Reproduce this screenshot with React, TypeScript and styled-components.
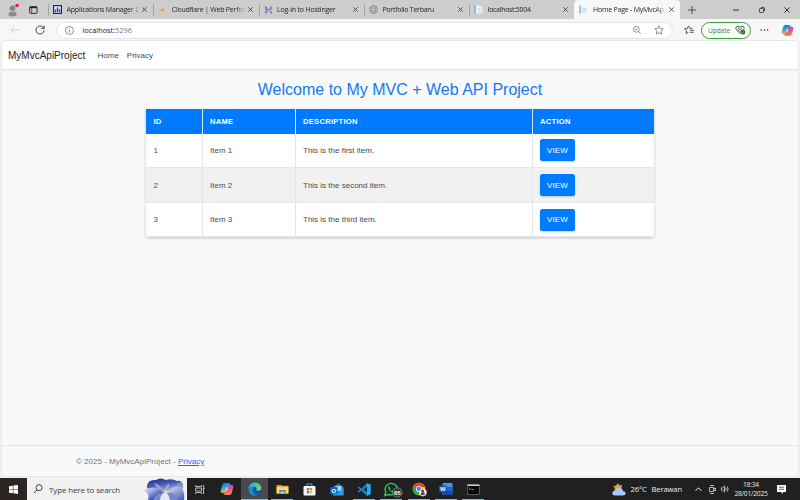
import React from "react";
import styled, { createGlobalStyle } from "styled-components";

const Global = createGlobalStyle`
  * { box-sizing: border-box; }
  body { margin: 0; overflow: hidden; background: #f3f3f4; }
  svg { display: block; flex: none; overflow: visible; }
`;

const ui = `"Open Sans", "Noto Sans", sans-serif`;
const web = `"Liberation Sans", Arial, sans-serif`;

const Screen = styled.div`
  width: 800px;
  height: 500px;
  display: flex;
  flex-direction: column;
  font-family: ${ui};
`;

/* Tab strip */
const TabStrip = styled.div`
  height: 19px;
  flex: none;
  display: flex;
  background: #cdcdcd;
`;
const StripTools = styled.div`
  width: 48px;
  display: flex;
  align-items: center;
  padding-left: 6px;
  gap: 10px;
`;
const Tab = styled.div<{ $active?: boolean }>`
  width: ${(p) => (p.$active ? 106 : 105.3)}px;
  height: 19px;
  display: flex;
  align-items: center;
  padding: 0 6px 0 3px;
  background: ${(p) => (p.$active ? "#f7f7f7" : "transparent")};
  border-radius: 4px 4px 0 0;
  &::before {
    content: "";
    width: 1px;
    height: 12px;
    margin: 0 4px 0 -3px;
    background: ${(p) => (p.$active ? "transparent" : "#a4a4a4")};
  }
`;
const TabLabel = styled.span<{ $track: number }>`
  flex: 1;
  margin-left: 4.5px;
  white-space: nowrap;
  font-size: 7px;
  line-height: 12px;
  letter-spacing: ${(p) => p.$track}px;
  color: #252525;
  mask-image: linear-gradient(to right, #000 63px, transparent 74px);
`;
const WindowButtons = styled.div`
  flex: 1;
  display: flex;
  align-items: center;
  padding-left: 8px;
`;
const Push = styled.div<{ $w: number }>`
  width: ${(p) => p.$w}px;
  flex: none;
`;

/* Address toolbar */
const Toolbar = styled.div`
  height: 22px;
  flex: none;
  display: flex;
  align-items: center;
  background: #f7f7f7;
  padding-left: 10px;
`;
const AddressBar = styled.div`
  width: 617px;
  height: 17px;
  margin-left: 11px;
  display: flex;
  align-items: center;
  padding-left: 8px;
  background: #fff;
  border: 1px solid #e4e4e4;
  border-radius: 9px;
`;
const Url = styled.span`
  flex: 1;
  margin-left: 8.5px;
  font-size: 7.4px;
  line-height: 14px;
  letter-spacing: -0.03px;
  color: #222;
  span { color: #777; }
`;
const UpdateButton = styled.div`
  width: 50px;
  height: 17px;
  margin-left: 7px;
  padding-left: 6px;
  display: flex;
  align-items: center;
  gap: 5px;
  border: 1px solid #3f9a42;
  border-radius: 9px;
  background: #fbfefb;
  font-size: 6.6px;
  letter-spacing: -0.1px;
  color: #2f8a34;
`;

/* Web page */
const Page = styled.div`
  width: 796px;
  height: 435px;
  margin: 0 2px 2px;
  flex: none;
  display: flex;
  flex-direction: column;
  background: #f8f9fb;
  border-radius: 4px;
  overflow: hidden;
  box-shadow: 0 0 1px 1px #e6e7e9;
  font-family: ${web};
`;
const Nav = styled.nav`
  height: 28px;
  flex: none;
  display: flex;
  align-items: center;
  padding-left: 6px;
  background: #fff;
  box-shadow: 0 1px 2px #dfe1e4;
  color: #4a4a4a;
  font-size: 8px;
`;
const Brand = styled.span`
  width: 89.5px;
  font-size: 10px;
  color: #1c1c1c;
`;
const NavLink = styled.span`
  margin-right: 8px;
`;
const Main = styled.main`
  flex: 1;
  display: flex;
  flex-direction: column;
  align-items: center;
`;
const Title = styled.h1`
  margin: 11px 0 10px;
  height: 19px;
  line-height: 19px;
  font-size: 16px;
  font-weight: 400;
  color: #1478f0;
  white-space: nowrap;
`;
const Table = styled.div`
  width: 508px;
  background: #fff;
  box-shadow: 0 1px 3px rgba(0, 0, 0, 0.22);
`;
const Row = styled.div<{ $head?: boolean; $striped?: boolean; $h: number }>`
  display: grid;
  grid-template-columns: 56.5px 93px 237px 1fr;
  height: ${(p) => p.$h}px;
  background: ${(p) => (p.$head ? "#007bff" : p.$striped ? "#f1f1f1" : "#fff")};
  color: ${(p) => (p.$head ? "#fff" : "#4b4b4b")};
  font-size: ${(p) => (p.$head ? 7.6 : 8)}px;
  font-weight: ${(p) => (p.$head ? 700 : 400)};
  letter-spacing: ${(p) => (p.$head ? 0.26 : 0)}px;
  border-bottom: ${(p) => (p.$head ? "none" : "1px solid #e6e8ea")};
`;
const Cell = styled.div`
  display: flex;
  align-items: center;
  padding-left: 7.5px;
  border-right: 1px solid #dfe6ec;
  &:last-child { border-right: none; }
`;
const ViewButton = styled.button`
  width: 35px;
  height: 22px;
  padding: 0;
  border: none;
  border-radius: 2.5px;
  background: #007bff;
  box-shadow: 0 1px 2px rgba(0, 0, 0, 0.2);
  color: #fff;
  font: 8px ${web};
  letter-spacing: 0.1px;
`;
const Footer = styled.footer`
  height: 31px;
  flex: none;
  padding: 0 0 0 74px;
  border-top: 1px solid #e2e5e8;
  line-height: 31px;
  font-size: 8px;
  color: #6c737a;
  a { color: #1a6ce8; text-decoration: underline; }
`;

/* Taskbar */
const Taskbar = styled.div`
  height: 22px;
  flex: none;
  display: flex;
  background: #202020;
`;
const StartButton = styled.div`
  width: 27px;
  display: flex;
  align-items: center;
  justify-content: center;
  background: #2c2523;
`;
const SearchBox = styled.div`
  width: 159.5px;
  display: flex;
  align-items: center;
  padding-left: 6px;
  background: #f1f1f1;
  font-size: 8px;
  color: #3c3c3c;
`;
const SearchText = styled.span`
  width: 95px;
  margin-left: 6px;
  white-space: nowrap;
  letter-spacing: -0.13px;
`;
const TaskSlot = styled.div<{ $open?: boolean; $active?: boolean }>`
  width: 27.3px;
  display: flex;
  align-items: center;
  justify-content: center;
  background-color: ${(p) => (p.$active ? "#484a4d" : "transparent")};
  background-image: ${(p) => (p.$open || p.$active ? "linear-gradient(#86b9e6, #86b9e6)" : "none")};
  background-size: ${(p) => (p.$active ? "100%" : "22px")} 1px;
  background-repeat: no-repeat;
  background-position: bottom center;
`;
const Tray = styled.div`
  flex: 1;
  display: flex;
  align-items: center;
  justify-content: flex-end;
  padding-right: 14px;
  font-size: 7.6px;
  color: #ededed;
  white-space: nowrap;
`;
const Weather = styled.span`
  margin: 0 13px 0 4px;
  letter-spacing: -0.12px;
  word-spacing: 3px;
`;
const Clock = styled.div`
  width: 36px;
  margin: 0 8px 0 4px;
  text-align: center;
  font-size: 6.6px;
  line-height: 9px;
  letter-spacing: -0.18px;
`;

type IconProps = { size?: number };

const Close = ({ size = 5 }: IconProps) => (
  <svg width={size} height={size} viewBox="0 0 6 6" stroke="#333" strokeWidth="1" fill="none">
    <path d="M.4.4l5.2 5.2M5.6.4L.4 5.6" />
  </svg>
);
const Avatar = () => (
  <svg width="13" height="14" viewBox="0 0 13 14">
    <circle cx="6.5" cy="5.3" r="2.8" fill="#858585" />
    <path d="M2.500 12.500V11q0-2.300 2.400-2.300h3.200Q10.500 8.700 10.500 11v1.500q-4 2-8 0z" fill="#8b8b8b" />
    <circle cx="11" cy="2.500" r="1.800" fill="#df2531" />
  </svg>
);
const Workspaces = () => (
  <svg width="9" height="8" viewBox="0 0 9 8" fill="none" stroke="#222">
    <rect x=".6" y=".6" width="7.400" height="6.800" rx="1" strokeWidth=".9" />
    <path d="M.6 1.500h7.400" strokeWidth="1.300" />
    <path d="M2.700 2v5.300" strokeWidth=".7" />
  </svg>
);
const ManagerIcon = () => (
  <svg width="9" height="9" viewBox="0 0 9 9">
    <rect x=".6" y=".6" width="7.800" height="7.800" fill="#e6ebff" stroke="#0f1f96" strokeWidth="1.200" />
    <path d="M2 7V5l1-.7V7zM4 7V2.500h1V7zM6 7V4l1 .7V7z" fill="#2443b8" stroke="#2443b8" strokeWidth=".4" />
  </svg>
);
const CloudIcon = () => (
  <svg width="9" height="9" viewBox="0 0 9 9">
    <path d="M.5 6Q1 4.500 2.500 4.700 3.500 2.500 5.500 3.400q.9.400 1 1.200L6 6z" fill="#f0a34f" />
    <path d="M6.400 6l.5-1.300Q8.400 4.600 8.600 6z" fill="#f8cc8c" />
  </svg>
);
const HostingerIcon = () => (
  <svg width="9" height="9" viewBox="0 0 9 9" fill="#8b7ed0">
    <path d="M1 .8l2 1.100v1.900h3.200L8 5H1zM6 .8l2 1.100v2.500L6 3.400zM1 8.200V5.500h5l2 1.200v2.300L6 8V6.600H3v2.500z" />
  </svg>
);
const GlobeIcon = () => (
  <svg width="9" height="9" viewBox="0 0 9 9" fill="none" stroke="#858585" strokeWidth=".7">
    <circle cx="4.500" cy="4.500" r="4" />
    <ellipse cx="4.500" cy="4.500" rx="1.800" ry="4" />
    <path d="M.9 3h7.200M.9 6h7.200" />
  </svg>
);
const DocIcon = () => (
  <svg width="9" height="9" viewBox="0 0 9 9">
    <path d="M1 .5h5l2.300 2.300v5.700H1z" fill="#eef6fc" />
    <path d="M1.100.5v8" stroke="#548eb9" />
    <path d="M3.500 3.500h3.500M3.500 5.300h4M3.500 7h4" stroke="#b8d1e5" strokeWidth=".8" />
  </svg>
);
const Copilot = ({ size = 14 }: IconProps) => (
  <svg width={size} height={size} viewBox="0 0 14 14">
    <defs>
      <linearGradient id="cpA" x2=".3" y2="1"><stop stopColor="#1267d8" /><stop offset=".5" stopColor="#25a8d5" /><stop offset="1" stopColor="#e1c934" /></linearGradient>
      <linearGradient id="cpB" x2=".2" y2="1"><stop stopColor="#a64be0" /><stop offset=".5" stopColor="#e65299" /><stop offset="1" stopColor="#f58a45" /></linearGradient>
    </defs>
    <path d="M4.500 1h4.200q1.300 0 1.700 1.400L10.700 4H8.600L6.200 10.300Q5.800 11 5 11H2.500Q.2 11 .7 8.600l1.600-5.500Q2.900 1 4.500 1z" fill="url(#cpA)" />
    <path d="M9.500 13H5.300Q4 13 3.600 11.600L3.300 10h2.100l2.400-6.300Q8.200 3 9 3h2.500q2.300 0 1.800 2.400l-1.600 5.500Q11.100 13 9.500 13z" fill="url(#cpB)" />
    <path d="M6.600 5.200h1.200L7 8.700H5.600z" fill="#fff" opacity=".8" />
  </svg>
);
const BackIcon = () => (
  <svg width="10" height="8" viewBox="0 0 10 8" fill="none" stroke="#cfcfcf" strokeWidth=".9"><path d="M9.500 4H1M4.300.8L1 4l3.300 3.200" /></svg>
);
const ReloadIcon = () => (
  <svg width="10" height="10" viewBox="0 0 10 10" fill="none" stroke="#444" strokeWidth="1"><path d="M9 5.200A4 4 0 1 1 7.800 2.100L9 3.300M9.100.6v2.800H6.300" /></svg>
);
const InfoIcon = () => (
  <svg width="9" height="9" viewBox="0 0 9 9" fill="none" stroke="#777" strokeWidth=".8"><circle cx="4.500" cy="4.500" r="4" /><path d="M4.500 4v2.700M4.500 2.300v.9" /></svg>
);
const ZoomIcon = () => (
  <svg width="8" height="8" viewBox="0 0 8 8" fill="none" stroke="#777" strokeWidth=".8"><circle cx="3.300" cy="3.300" r="2.900" /><path d="M5.400 5.400l2.400 2.400M2 3.300h2.600" /></svg>
);
const StarIcon = () => (
  <svg width="10" height="10" viewBox="0 0 10 10" fill="none" stroke="#777" strokeWidth=".8" strokeLinejoin="round"><path d="M5 .8l1.300 2.700 3 .4-2.200 2.100.5 3L5 7.600 2.400 9l.5-3L.7 3.900l3-.4z" /></svg>
);
const FavoritesIcon = () => (
  <svg width="10" height="10" viewBox="0 0 10 10" fill="none" stroke="#444" strokeWidth=".9" strokeLinejoin="round"><path d="M8.300 3.400l-2.500-.1L4.500.9 3.300 3.400l-2.700.4 2 1.900-.5 2.900 2.400-1.300M6 5.300h3.700M6 7.300h3.700" /></svg>
);
const HeartIcon = () => (
  <svg width="11" height="10" viewBox="0 0 11 10" fill="none" stroke="#384538" strokeWidth=".9">
    <path d="M5 8.300L1.300 4.800Q.2 3 1.500 1.800 3.300.4 5 2.200 6.800.4 8.600 1.800 9.600 3 8.900 4.400M3 2.800l2 1.900L6.800 3M3 5l1.500 1.300" />
    <circle cx="7.800" cy="7" r="2.500" fill="#28722d" stroke="none" /><path d="M6.600 7l.9.900L9 6.300" stroke="#c5e8c6" strokeWidth=".6" />
  </svg>
);
const WindowsLogo = () => (
  <svg width="9" height="9" viewBox="0 0 9 9" fill="#fff"><path d="M0 1.200l3.900-.5v3.500H0zM4.400.6L9 0v4.200H4.400zM0 4.700h3.900v3.500L0 7.700zM4.400 4.700H9V9l-4.600-.7z" /></svg>
);
const SearchIcon = () => (
  <svg width="10" height="10" viewBox="0 0 10 10" fill="none" stroke="#333" strokeWidth=".9"><circle cx="6" cy="3.700" r="3" /><path d="M3.900 5.900L.8 9.200" /></svg>
);
const FlowerArt = () => (
  <svg width="43" height="22" viewBox="0 0 43 22">
    <defs>
      <linearGradient id="pt" x2=".4" y2="1"><stop stopColor="#1f2a80" /><stop offset=".45" stopColor="#4257b0" /><stop offset="1" stopColor="#c4c8f3" /></linearGradient>
      <linearGradient id="pb" x2=".7" y2=".6"><stop stopColor="#e4e6fa" /><stop offset=".5" stopColor="#9aa6df" /><stop offset="1" stopColor="#3850a8" /></linearGradient>
      <linearGradient id="pc" x2=".8" y2="1"><stop stopColor="#dde2fb" /><stop offset="1" stopColor="#4e64b8" /></linearGradient>
    </defs>
    <path d="M3 8Q4 1 12 2q4-3 10 0 6-2 11 1 5-1 6 4 1 3-1 6L27 16 9 12Q2 12 3 8z" fill="url(#pt)" />
    <path d="M0 12Q9 7 18 12l5 3-5 7H4Q6 16 0 12z" fill="url(#pb)" />
    <path d="M23 14Q31 6 38 10q3 5 2 12H24z" fill="url(#pc)" />
    <path d="M9 22q3-7 10-8l6 .5q7 1 9 7.500z" fill="#7485cc" />
    <path d="M16 22q0-6 6-8 3 3 4 8z" fill="#e4e7fb" />
    <path d="M10 5q6 1 9 7-7-1-9-7zM25 5q-4 3-3 7 4-2 3-7z" fill="#a9b5ec" opacity=".7" />
    <path d="M16 12l4 1.200 2-2.500 1 2.500 4 .5-5 2z" fill="#e7cfa7" />
    <path d="M33 8l5-4" stroke="#e2cca9" strokeWidth=".7" />
  </svg>
);
const TaskView = () => (
  <svg width="10" height="9" viewBox="0 0 10 9" fill="none" stroke="#ddd" strokeWidth=".8"><path d="M.6 0v1.500h6V0M.6 9V7.500h6V9M.6 3h6v3h-6zM8.600 0v9M7.900 3.500h1.600" /></svg>
);
const Edge = () => (
  <svg width="14" height="14" viewBox="0 0 14 14">
    <defs><linearGradient id="eg" x2="1" y2=".3"><stop stopColor="#20a8dc" /><stop offset="1" stopColor="#6bd968" /></linearGradient></defs>
    <circle cx="7" cy="7" r="6.500" fill="#0d67bd" />
    <path d="M.5 6.600C1-.2 10-2 13 4.500c1.400 4-3.500 5.500-5 3.600 1.500-2 .2-3.600-2-3.600Q2.500 4.500.5 6.600z" fill="url(#eg)" />
    <path d="M.5 6.600Q2.800 4 5.600 4.900 3.700 6.500 4.500 9.300q1.300 3.500 4.600 3.800Q3 15 .9 9.500z" fill="#1692d4" />
    <path d="M8 8.100q1.500 2.300 5 .6l-.5 1.500Q10 12 7.500 10.500 5.200 9 6.500 6.500 8 5 8.500 6.800z" fill="#174982" />
  </svg>
);
const Explorer = () => (
  <svg width="13" height="10" viewBox="0 0 14 11"><path d="M.5 1h5l1 1h7v8.500H.5z" fill="#d99d22" /><path d="M.5 3h13v7.500H.5z" fill="#ffd867" /><path d="M3.500 10.500V6.500h7v4H9v-2H5v2z" fill="#3c91cf" /></svg>
);
const Store = () => (
  <svg width="13" height="13" viewBox="0 0 13 13"><path d="M4 3V1h5v2" fill="none" stroke="#39a8e8" /><rect x=".5" y="3" width="12" height="9.500" rx="1" fill="#f8f8f8" /><path fill="#ec4b35" d="M3.800 5h2.400v2.400H3.800z" /><path fill="#77b82d" d="M6.800 5h2.400v2.400H6.800z" /><path fill="#1d91d9" d="M3.800 8h2.400v2.400H3.800z" /><path fill="#f5b62a" d="M6.800 8h2.400v2.400H6.800z" /></svg>
);
const AppLetter = styled.text`
  font: 700 6px ${web};
  fill: #fff;
`;
const Outlook = () => (
  <svg width="14" height="13" viewBox="0 0 14 13"><path d="M3 4l5.500-3.500L13.500 4v8H3z" fill="#167fd0" /><path d="M5 3h6.500v5H5z" fill="#8fd8f7" /><path d="M3 6l5.500 3.500L13.500 5v7.500H3z" fill="#279fe0" /><rect y="4" width="7.500" height="7" rx="1" fill="#0967b6" /><AppLetter x="1.400" y="9.700">O</AppLetter></svg>
);
const VsCode = () => (
  <svg width="14" height="13" viewBox="0 0 14 13"><path d="M10 .3l3.500 1.500v9.400L10 12.700 4.300 7.600 2 9.400l-1.300-.8L3 6.500.7 4.400 2 3.600l2.300 1.800zM10 3.800L6.500 6.500 10 9.200z" fill="#1687ce" /><path d="M10 .3l3.500 1.500v9.400L10 12.700z" fill="#35a9ef" /></svg>
);
const WhatsApp = () => (
  <svg width="14" height="15" viewBox="0 0 14 15">
    <path d="M.8 13.500l1-3.300Q-.3 5.500 4 2.300q4-2.300 7.500.7 3 3.300 1 7Q9.800 14 4.500 12.500z" fill="#172b1d" stroke="#39c765" strokeWidth="1.300" />
    <path d="M5 4.200q-1 .5-.7 2 1 3.400 4.700 4.500 1.200 0 1.400-1.400L8.700 8.400l-.8.9Q6.500 8.700 5.800 7.200l.7-.9z" fill="#3bc965" />
    <circle cx="13.300" cy="10.500" r="4.700" fill="#303433" stroke="#9a9d9b" strokeWidth=".7" />
    <AppLetter x="9.900" y="12.700">65</AppLetter>
  </svg>
);
const Chrome = () => (
  <svg width="14" height="15" viewBox="0 0 14 15"><circle cx="7" cy="7" r="6.300" fill="#f5c52c" /><path d="M1.500 3.900A6.300 6.300 0 0 1 13 5H7L4.500 8.500z" fill="#e54537" /><path d="M1.500 3.900L5 9l3 .7-2 3.500A6.300 6.300 0 0 1 1.500 3.900z" fill="#2fa44f" /><circle cx="7" cy="7" r="3" fill="#fff" /><circle cx="7" cy="7" r="2.300" fill="#4286ec" /><circle cx="11" cy="10.500" r="3.700" fill="#ece9e5" /><circle cx="10.700" cy="9" r="1.500" fill="#554b45" /><path d="M8.700 13.200q.2-3.700 2.200-3.200 2 .3 2.200 3z" fill="#514b4c" /></svg>
);
const Word = () => (
  <svg width="14" height="12" viewBox="0 0 14 12"><rect x="3.500" width="10" height="12" rx="1" fill="#3ba0e8" /><path d="M3.500 4h10v7q0 1-1 1h-9z" fill="#1e66c4" /><path d="M3.500 8h10v3q0 1-1 1h-9z" fill="#1649a0" /><rect y="2.500" width="7.500" height="7" rx="1" fill="#174ea6" /><AppLetter x=".9" y="8.100">W</AppLetter></svg>
);
const Terminal = () => (
  <svg width="13" height="11" viewBox="0 0 13 11"><rect x=".4" y=".4" width="12.200" height="10.200" fill="#080808" stroke="#777" strokeWidth=".7" /><path d="M.7 1.300h11.600" stroke="#ddd" strokeWidth="1.300" /><path d="M2 3.700l1.400 1L2 5.700M4.300 5.700h2.500" stroke="#bbb" strokeWidth=".7" fill="none" /></svg>
);
const WeatherIcon = () => (
  <svg width="14" height="13" viewBox="0 0 14 13"><path d="M6 0l1.400 2.500L10 2 9.500 5 7 8 2 7.500 3 5 1 3l3-.3z" fill="#e5a33b" /><path d="M3 12.500q-3-.2-2.700-2.700.4-2 2.700-2 1-3 4.200-3 3 .1 3.800 3.100 2.700.3 2.700 2.500-.2 2-2.700 2.100z" fill="#a9c9fa" /></svg>
);

const tabs = [
  { label: "Applications Manager L", icon: <ManagerIcon />, track: -0.18 },
  { label: "Cloudflare | Web Perfor", icon: <CloudIcon />, track: -0.22 },
  { label: "Log-in to Hostinger", icon: <HostingerIcon />, track: -0.2 },
  { label: "Portfolio Terbaru", icon: <GlobeIcon />, track: -0.25 },
  { label: "localhost:5004", icon: <DocIcon />, track: -0.3 },
  { label: "Home Page - MyMvcAp", icon: <DocIcon />, track: -0.22, active: true },
];

const items = [
  { id: 1, name: "Item 1", description: "This is the first item.", h: 34.5 },
  { id: 2, name: "Item 2", description: "This is the second item.", h: 35 },
  { id: 3, name: "Item 3", description: "This is the third item.", h: 34 },
];

const apps = [
  { icon: <TaskView /> },
  { icon: <Copilot /> },
  { icon: <Edge />, active: true },
  { icon: <Explorer />, open: true },
  { icon: <Store /> },
  { icon: <Outlook /> },
  { icon: <VsCode />, open: true },
  { icon: <WhatsApp />, open: true },
  { icon: <Chrome />, open: true },
  { icon: <Word />, open: true },
  { icon: <Terminal />, open: true },
];

export default function App() {
  return (
    <Screen>
      <Global />
      <TabStrip>
        <StripTools><Avatar /><Workspaces /></StripTools>
        {tabs.map((t) => (
          <Tab key={t.label} $active={t.active}>
            {t.icon}
            <TabLabel $track={t.track}>{t.label}</TabLabel>
            <Close />
          </Tab>
        ))}
        <WindowButtons>
          <svg width="8" height="8" viewBox="0 0 8 8" stroke="#444" fill="none" strokeWidth=".9"><path d="M4 0v8M0 4h8" /></svg>
          <Push $w={37} />
          <svg width="6" height="2" stroke="#333"><path d="M0 1h6" /></svg>
          <Push $w={20} />
          <svg width="6" height="6" viewBox="0 0 6 6" stroke="#333" fill="none" strokeWidth=".9"><rect x=".5" y="1.500" width="4" height="4" rx=".8" /><path d="M2 .5h2.500q1 0 1 1V4" /></svg>
          <Push $w={19} />
          <Close size={6} />
        </WindowButtons>
      </TabStrip>
      <Toolbar>
        <BackIcon />
        <Push $w={15} />
        <ReloadIcon />
        <AddressBar>
          <InfoIcon />
          <Url>localhost:<span>5296</span></Url>
          <ZoomIcon />
          <Push $w={13} />
          <StarIcon />
          <Push $w={8} />
        </AddressBar>
        <Push $w={11} />
        <FavoritesIcon />
        <UpdateButton>Update<HeartIcon /></UpdateButton>
        <Push $w={9} />
        <svg width="9" height="2" fill="#333"><circle cx="1.200" cy="1" r=".8" /><circle cx="4.400" cy="1" r=".8" /><circle cx="7.600" cy="1" r=".8" /></svg>
        <Push $w={12} />
        <Copilot size={13} />
      </Toolbar>
      <Page>
        <Nav>
          <Brand>MyMvcApiProject</Brand>
          <NavLink>Home</NavLink>
          <NavLink>Privacy</NavLink>
        </Nav>
        <Main>
          <Title>Welcome to My MVC + Web API Project</Title>
          <Table>
            <Row $head $h={24.5}>
              <Cell>ID</Cell><Cell>NAME</Cell><Cell>DESCRIPTION</Cell><Cell>ACTION</Cell>
            </Row>
            {items.map((it) => (
              <Row key={it.id} $h={it.h} $striped={it.id === 2}>
                <Cell>{it.id}</Cell>
                <Cell>{it.name}</Cell>
                <Cell>{it.description}</Cell>
                <Cell><ViewButton>VIEW</ViewButton></Cell>
              </Row>
            ))}
          </Table>
        </Main>
        <Footer>© 2025 - MyMvcApiProject - <a>Privacy</a></Footer>
      </Page>
      <Taskbar>
        <StartButton><WindowsLogo /></StartButton>
        <SearchBox>
          <SearchIcon />
          <SearchText>Type here to search</SearchText>
          <FlowerArt />
        </SearchBox>
        {apps.map((a, i) => (
          <TaskSlot key={i} $open={a.open} $active={a.active}>{a.icon}</TaskSlot>
        ))}
        <Tray>
          <WeatherIcon />
          <Weather>26°C Berawan</Weather>
          <svg width="7" height="4" fill="none" stroke="#eee"><path d="M.5 3.800l3-3 3 3" /></svg>
          <Push $w={7} />
          <svg width="7" height="9" viewBox="0 0 7 9" fill="none" stroke="#ddd" strokeWidth=".8"><path d="M1 .5h4M.5 2.500h4v4h-4zM4.500 4l2-1v3l-2-1M1 8.500h4" /></svg>
          <Push $w={5} />
          <svg width="8" height="8" viewBox="0 0 8 8" fill="none" stroke="#ddd" strokeWidth=".8"><path d="M.4 2.800h1.200L3.500 1v6L1.600 5.200H.4zM4.700 2.700q.8 1.300 0 2.600M6.200 1.500q1.800 2.500 0 5" /></svg>
          <Clock>18:34<br />28/01/2025</Clock>
          <svg width="9" height="9" viewBox="0 0 9 9"><path d="M0 0h9v7H6v2L4 7H0z" fill="#fff" /><path d="M2 2.200h5M2 4.300h5" stroke="#333" strokeWidth=".8" /></svg>
        </Tray>
      </Taskbar>
    </Screen>
  );
}
